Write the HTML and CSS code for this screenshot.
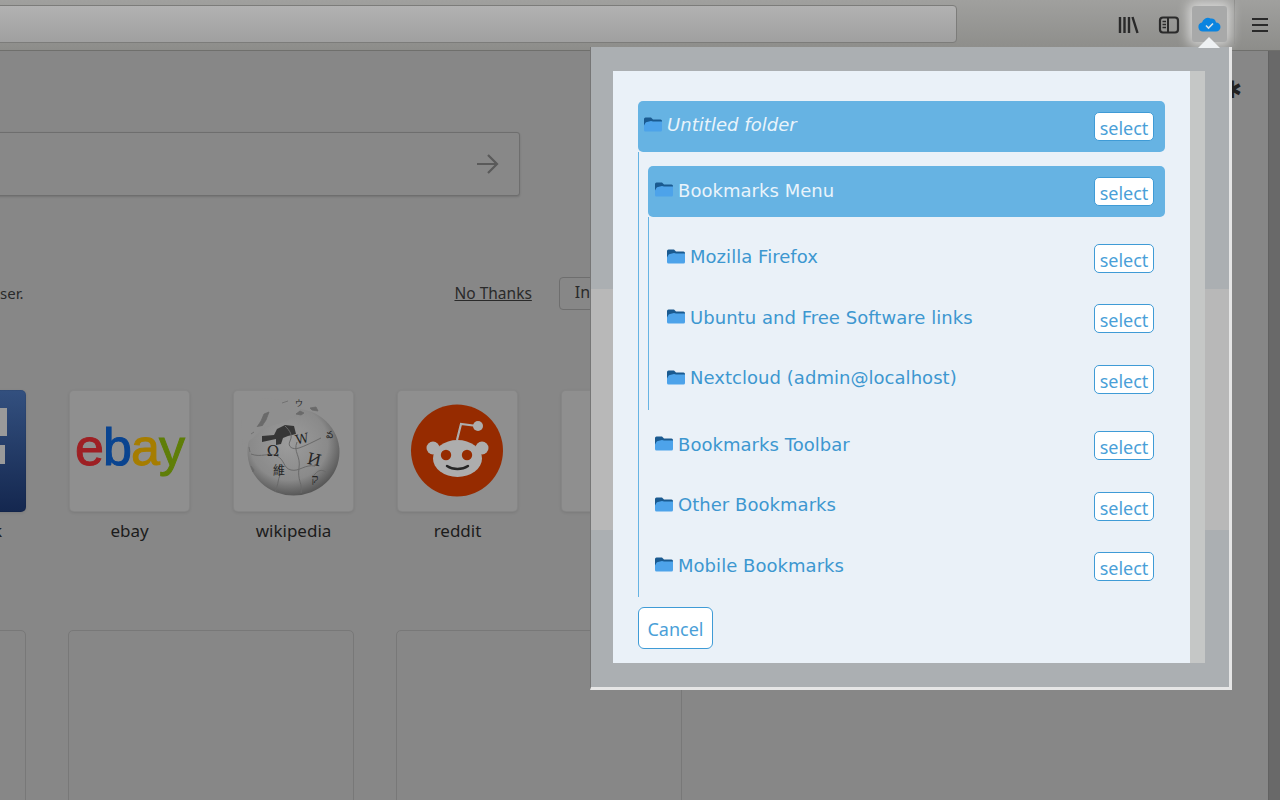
FILE: index.html
```html
<!DOCTYPE html>
<html lang="en">
<head>
<meta charset="utf-8">
<title>Select folder</title>
<link rel="stylesheet" href="styles.css">
</head>
<body>
<svg class="defs" width="0" height="0" aria-hidden="true">
  <symbol id="folder" viewBox="0 0 18 15">
    <path d="M0 2A1.500 1.500 0 0 1 1.500.500H7L9 2.500h7.500A1.500 1.500 0 0 1 18 4v5H0z" fill="#1a5a90"/>
    <path d="M0 8.500L1.500 5.800Q2 5 3 5L7 4 9 4.500H18V13a1.500 1.500 0 0 1-1.500 1.500H1.500A1.500 1.500 0 0 1 0 13z" fill="#4da3ea"/>
  </symbol>
</svg>

<header class="toolbar">
  <div class="urlbar"></div>
  <div class="tools">
    <svg class="tool" width="22" height="20" viewBox="0 0 22 20"><path d="M2 2v16M6.500 2v16M11 2v16M14.500 2l5 16" fill="none" stroke="#2a2a2a" stroke-width="2.400"/></svg>
    <svg class="tool" width="22" height="20" viewBox="0 0 22 20"><rect x="2" y="2.500" width="18" height="15" rx="3" fill="none" stroke="#2a2a2a" stroke-width="2.200"/><path d="M10 3v14" stroke="#2a2a2a" stroke-width="2"/><path d="M4.500 6.500h3.500M4.500 9.500h3.500M4.500 12.500h3.500" stroke="#2a2a2a" stroke-width="1.600"/></svg>
    <div class="cloud-btn">
      <svg width="23" height="16" viewBox="0 0 23 16"><path d="M5 15.500a4.500 4.500 0 0 1-1-8.900A6 6 0 0 1 12.500 2.500 5 5 0 0 1 18 6.500a4.500 4.500 0 0 1 0 9z" fill="#0a84e0"/><path d="M8 9.500l2.500 2.500 4.500-4.500" fill="none" stroke="#d8e4ec" stroke-width="1.600"/></svg>
    </div>
    <div class="tool-sep"></div>
    <svg class="tool-menu" width="16" height="16" viewBox="0 0 16 16"><path d="M0 2h16M0 8h16M0 14h16" stroke="#2a2a2a" stroke-width="2.200"/></svg>
  </div>
</header>

<div class="page">
  <main class="content">
    <div class="search">
      <svg width="24" height="22" viewBox="0 0 24 22"><path d="M2 11h20M13 2l9 9-9 9" fill="none" stroke="#5a5a5a" stroke-width="2.200"/></svg>
    </div>
    <div class="snippet">
      <span class="snippet-text">ser.</span>
      <a class="no-thanks">No Thanks</a>
      <span class="install">In</span>
    </div>
    <div class="tiles">
      <figure class="tile">
        <div class="thumb thumb-fb"><span class="fb-f"></span><span class="fb-f2"></span></div>
        <figcaption>facebook</figcaption>
      </figure>
      <figure class="tile">
        <div class="thumb thumb-ebay"><span class="e1">e</span><span class="e2">b</span><span class="e3">a</span><span class="e4">y</span></div>
        <figcaption>ebay</figcaption>
      </figure>
      <figure class="tile">
        <div class="thumb">
          <svg width="122" height="122" viewBox="0 0 122 122">
            <defs><radialGradient id="wg" cx="0.45" cy="0.4" r="0.65"><stop offset="0" stop-color="#9c9c9c"/><stop offset="0.65" stop-color="#8a8a8a"/><stop offset="1" stop-color="#4a4a4a"/></radialGradient></defs>
            <ellipse cx="60.500" cy="62" rx="46" ry="43.500" fill="url(#wg)"/>
            <path d="M10 55L20 48 30 38 54 31 66 22 70 12 30 8 8 30z" fill="#8f8f8f"/>
            <path d="M29 46l12-1 3-6 8-4 9 1 2 8-8 2-5 2-2 6-5 1 0-6-14 3z" fill="#363636"/>
            <path d="M18 44l3-2M24 37l4-6 3-7 5-2-3 8-4 6M17 62l-1-5M49 13l6-2M63 24l4-3 4 2-3 2zM77 18l6-1 2 4-6-1zM18 76l3 4-1 2z" fill="#6a6a6a" stroke="#6a6a6a" stroke-width=".8"/>
            <path d="M52 36c5 5 8 9 5 15s3 9 9 7 14-6 22-10M18 64c10 4 18-2 26 2s6 12 14 14 14-6 24-4M42 102c4-8 2-14 8-22M64 52c-4 10 4 14 2 26s4 16 2 25M93 82c-6-4-10 0-14 6" fill="none" stroke="#6a6a6a" stroke-width="1"/>
            <g class="wiki" fill="#262626" text-anchor="middle">
              <text x="40" y="66" font-size="15">Ω</text>
              <text x="70" y="53" font-size="13" transform="rotate(-12 70 53)">W</text>
              <text x="80" y="75" font-size="16" transform="rotate(12 80 75)">И</text>
              <text x="46" y="85" font-size="12">維</text>
              <text x="96" y="48" font-size="10">వ</text>
              <text x="82" y="93" font-size="13">ק</text>
              <text x="66" y="16" font-size="8">ウ</text>
            </g>
          </svg>
        </div>
        <figcaption>wikipedia</figcaption>
      </figure>
      <figure class="tile">
        <div class="thumb">
          <svg width="122" height="122" viewBox="0 0 122 122">
            <circle cx="60" cy="60.500" r="46" fill="#962b00"/>
            <circle cx="36" cy="58" r="6.500" fill="#adadad"/>
            <circle cx="85" cy="58" r="6.500" fill="#adadad"/>
            <ellipse cx="60.500" cy="68.500" rx="24.500" ry="18.500" fill="#adadad"/>
            <path d="M60 50l4-16 16 2" fill="none" stroke="#adadad" stroke-width="2.200"/>
            <circle cx="81" cy="36" r="5" fill="#adadad"/>
            <circle cx="49" cy="65" r="5.200" fill="#962b00"/>
            <circle cx="70" cy="65" r="5.200" fill="#962b00"/>
            <path d="M50 76c6 4 15 4 21 0" fill="none" stroke="#262626" stroke-width="2.400" stroke-linecap="round"/>
          </svg>
        </div>
        <figcaption>reddit</figcaption>
      </figure>
      <figure class="tile"><div class="thumb"></div></figure>
    </div>
    <div class="placeholders">
      <div class="ph"></div>
      <div class="ph"></div>
      <div class="ph"></div>
    </div>
    <div class="gear">✱</div>
  </main>
  <aside class="sidebar"></aside>
</div>

<div class="arrow"></div>
<section class="popup">
  <div class="band"></div>
  <div class="panel">
    <div class="panel-body">
      <div class="row active root">
        <svg class="fi"><use href="#folder"/></svg>
        <em class="name">Untitled folder</em>
        <button class="select">select</button>
      </div>
      <div class="tree lvl1">
        <div class="row active">
          <svg class="fi"><use href="#folder"/></svg>
          <span class="name">Bookmarks Menu</span>
          <button class="select">select</button>
        </div>
        <div class="tree lvl2">
          <div class="row">
            <svg class="fi"><use href="#folder"/></svg>
            <span class="name">Mozilla Firefox</span>
            <button class="select">select</button>
          </div>
          <div class="row">
            <svg class="fi"><use href="#folder"/></svg>
            <span class="name">Ubuntu and Free Software links</span>
            <button class="select">select</button>
          </div>
          <div class="row">
            <svg class="fi"><use href="#folder"/></svg>
            <span class="name">Nextcloud (admin@localhost)</span>
            <button class="select">select</button>
          </div>
        </div>
        <div class="row">
          <svg class="fi"><use href="#folder"/></svg>
          <span class="name">Bookmarks Toolbar</span>
          <button class="select">select</button>
        </div>
        <div class="row">
          <svg class="fi"><use href="#folder"/></svg>
          <span class="name">Other Bookmarks</span>
          <button class="select">select</button>
        </div>
        <div class="row">
          <svg class="fi"><use href="#folder"/></svg>
          <span class="name">Mobile Bookmarks</span>
          <button class="select">select</button>
        </div>
      </div>
      <button class="cancel">Cancel</button>
    </div>
    <div class="scrollbar"></div>
  </div>
</section>
</body>
</html>
```
FILE: styles.css
```css
* { box-sizing: border-box; }
html, body { margin: 0; height: 100%; }
body {
  width: 1280px;
  height: 800px;
  overflow: hidden;
  background: #878787;
  font-family: "Noto Sans", sans-serif;
  color: #1e1e1e;
  display: flex;
  flex-direction: column;
}
.defs { position: absolute; }

/* toolbar */
.toolbar {
  height: 51px;
  flex: none;
  display: flex;
  align-items: flex-start;
  background: linear-gradient(#a0a09e, #8d8d8a);
  border-bottom: 1px solid #6f6f6c;
}
.urlbar {
  width: 967px;
  height: 38px;
  margin: 5px 0 0 -10px;
  background: linear-gradient(#b2b2b2, #a0a0a0);
  border: 1px solid #7c7c7a;
  border-radius: 4px;
}
.tools {
  flex: 1;
  display: flex;
  align-items: center;
  height: 50px;
  padding-left: 161px;
}
.tool { display: block; flex: none; }
.tool + .tool { margin-left: 18px; }
.cloud-btn {
  width: 35px;
  height: 36px;
  margin: 0 0 2px 12px;
  flex: none;
  display: flex;
  align-items: center;
  justify-content: center;
  border-radius: 3px;
  background: #a8a9a9;
  box-shadow: 0 0 12px 4px rgba(255, 255, 255, .6);
  position: relative;
}
.tool-sep {
  width: 1px;
  height: 44px;
  margin: 0 0 6px 7px;
  background: #8a8a88;
  flex: none;
}
.tool-menu { margin-left: 17px; flex: none; }

/* page */
.page { flex: 1; display: flex; min-height: 0; }
.content { flex: 1; min-width: 0; overflow: hidden; position: relative; }
.sidebar {
  width: 12px;
  flex: none;
  background: #696969;
  border-left: 1px solid #626262;
}
.search {
  width: 530px;
  height: 64px;
  margin: 81px 0 0 -10px;
  border: 1px solid #6e6e6e;
  border-radius: 3px;
  background: #888;
  box-shadow: 0 1px 2px rgba(0, 0, 0, .15);
  display: flex;
  align-items: center;
  justify-content: flex-end;
  padding-right: 20px;
}
.snippet {
  height: 33px;
  margin-top: 81px;
  display: flex;
  align-items: center;
  color: #2a2a2a;
}
.snippet-text { font-size: 15px; padding-bottom: 2px; }
.no-thanks {
  margin-left: 431px;
  font-size: 15.500px;
  padding-bottom: 2px;
  text-decoration: underline;
}
.install {
  margin-left: 27px;
  width: 90px;
  height: 33px;
  border: 1px solid #6e6e6e;
  border-radius: 4px;
  padding: 3px 15px;
  font-size: 16px;
  flex: none;
}
.tiles {
  margin: 80px 0 0 -95px;
  display: flex;
  gap: 43px;
}
.tile { margin: 0; width: 121px; flex: none; }
.thumb {
  height: 122px;
  background: #8f8f8f;
  border-radius: 5px;
  box-shadow: inset 0 0 0 1px rgba(0, 0, 0, .06), 0 1px 3px rgba(0, 0, 0, .1);
  overflow: hidden;
  position: relative;
}
.thumb svg { display: block; }
.thumb-fb { background: linear-gradient(#33507f, #14274f); }
.fb-f, .fb-f2 { position: absolute; background: #9a9a9a; }
.fb-f { left: 95px; top: 18px; width: 7px; height: 28px; }
.fb-f2 { left: 95px; top: 55px; width: 5px; height: 19px; }
.thumb-ebay {
  display: flex;
  align-items: center;
  justify-content: center;
  font-family: "Liberation Sans", sans-serif;
  font-size: 52px;
  letter-spacing: -1px;
  -webkit-text-stroke: 1px;
  padding-bottom: 8px;
}
.e1 { color: #9e2024; }
.e2 { color: #0a4490; }
.e3 { color: #a67d00; }
.e4 { color: #5f7e08; }
.wiki { font-family: "DejaVu Serif", "Noto Sans CJK SC", serif; }
figcaption {
  margin-top: 8px;
  text-align: center;
  font-size: 17px;
  line-height: 22px;
  color: #1c1c1c;
}
.placeholders {
  margin: 88px 0 0 -260px;
  display: flex;
  gap: 42px;
}
.ph {
  width: 286px;
  height: 300px;
  flex: none;
  border: 1px solid #787878;
  border-radius: 5px;
}
.gear {
  position: absolute;
  left: 1222px;
  top: 26px;
  font-size: 24px;
  line-height: 26px;
  color: #222;
  font-family: "DejaVu Sans", sans-serif;
}

/* popup */
.arrow {
  position: absolute;
  left: 1198px;
  top: 37px;
  width: 0;
  height: 0;
  border: 11px solid transparent;
  border-top: 0;
  border-bottom-color: #eef1f3;
  z-index: 3;
}
.popup {
  position: absolute;
  left: 590px;
  top: 47px;
  width: 642px;
  height: 643px;
  padding: 24px 27px 27px 23px;
  background: #abafb2;
  border-left: 1px solid #767676;
  border-right: 3px solid #e6e6e6;
  border-bottom: 3px solid #e6e6e6;
  z-index: 2;
}
.band {
  position: absolute;
  left: 0;
  right: 0;
  top: 242px;
  height: 241px;
  background: #b8b8b8;
}
.panel {
  position: relative;
  height: 592px;
  width: 592px;
  margin-left: -1px;
  display: flex;
}
.panel-body {
  flex: 1;
  background: #eaf1f8;
  padding: 30px 25px 0;
}
.scrollbar { width: 15px; background: #c5c7c6; flex: none; }
.row {
  height: 50.500px;
  margin-bottom: 10px;
  display: flex;
  align-items: center;
  border-radius: 5px;
  padding: 0 11px 0 6px;
  font-family: "DejaVu Sans", sans-serif;
  font-size: 18px;
  letter-spacing: .04px;
  color: #3d97d0;
}
.row.active { height: 51px; background: #66b3e3; color: #e9f4fb; margin-bottom: 0; }
.row.root { margin-bottom: 14px; }
.row.root .name { margin-top: -5px; }
.lvl1 {
  border-left: 1px solid #66b3e3;
  margin-top: -14px;
  padding: 14px 0 5px 9px;
}
.lvl1 > .row:last-child { margin-bottom: 0; }
.lvl2 {
  border-left: 1px solid #66b3e3;
  padding: 16px 0 5px 11px;
  margin-bottom: 11px;
}
.lvl1 > .row { padding-left: 7px; }
.lvl2 > .row { padding-left: 7px; }
.lvl2 > .row:last-child { margin-bottom: 0; }
.fi { width: 18px; height: 15px; flex: none; margin-right: 5px; margin-top: -4px; }
.name { flex: 1; min-width: 0; margin-top: -3px; font-size: 18px; white-space: nowrap; }
.select {
  width: 60px;
  height: 29px;
  flex: none;
  background: #fff;
  border: 1px solid #3f9bd6;
  border-radius: 5px;
  padding: 3px 0 0;
  font-family: "Noto Sans", sans-serif;
  font-size: 18px;
  line-height: 24px;
  color: #4a9fd8;
}
.cancel {
  display: block;
  width: 75px;
  height: 42px;
  margin-top: 10px;
  background: #fff;
  border: 1px solid #3f9bd6;
  border-radius: 6px;
  padding: 2px 0 0;
  font-family: "Noto Sans", sans-serif;
  font-size: 18px;
  color: #4a9fd8;
}
```
